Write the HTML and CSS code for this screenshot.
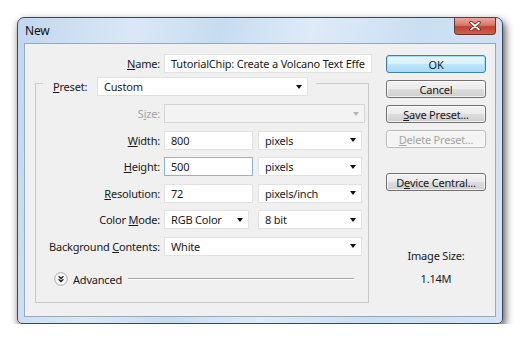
FILE: index.html
```html
<!doctype html>
<html>
  <head>
    <meta charset="utf-8">
    <title>New</title>
    <link rel="stylesheet" href="styles.css">
  </head>
  <body>
    <div class="window">
      <div class="titlebar">
        <span class="title">New</span>
        <span class="close">
          <svg width="12" height="10" viewBox="0 0 12 10">
            <path d="M2 1.5 L10 8.5 M10 1.5 L2 8.5" stroke="#5b1a12" stroke-width="3.4" stroke-linecap="round"/>
            <path d="M2 1.5 L10 8.5 M10 1.5 L2 8.5" stroke="#fff" stroke-width="1.8" stroke-linecap="round"/>
          </svg>
        </span>
      </div>

      <div class="client">
        <div class="form">
          <div class="row">
            <label class="lbl wide"><u>N</u>ame:</label>
            <div class="field name-field">TutorialChip: Create a Volcano Text Effe</div>
          </div>

          <fieldset class="preset">
            <legend>
              <span class="legend-lbl"><u>P</u>reset:</span>
              <div class="select preset-select">Custom<span class="caret"></span></div>
            </legend>

            <div class="rows">
              <div class="row">
                <label class="lbl off">S<u>i</u>ze:</label>
                <div class="select size-select disabled"><span></span><span class="caret"></span></div>
              </div>
              <div class="row">
                <label class="lbl"><u>W</u>idth:</label>
                <div class="pair">
                  <div class="field num">800</div>
                  <div class="select unit">pixels<span class="caret"></span></div>
                </div>
              </div>
              <div class="row">
                <label class="lbl"><u>H</u>eight:</label>
                <div class="pair">
                  <div class="field num focus">500</div>
                  <div class="select unit">pixels<span class="caret"></span></div>
                </div>
              </div>
              <div class="row">
                <label class="lbl"><u>R</u>esolution:</label>
                <div class="pair">
                  <div class="field num">72</div>
                  <div class="select unit">pixels/inch<span class="caret"></span></div>
                </div>
              </div>
              <div class="row">
                <label class="lbl">Color <u>M</u>ode:</label>
                <div class="pair">
                  <div class="select mode">RGB Color<span class="caret"></span></div>
                  <div class="select unit">8 bit<span class="caret"></span></div>
                </div>
              </div>
              <div class="row">
                <label class="lbl">Background <u>C</u>ontents:</label>
                <div class="select bg-select">White<span class="caret"></span></div>
              </div>

              <div class="advanced">
                <svg width="14" height="14" viewBox="0 0 14 14">
                  <circle cx="7" cy="7" r="6.3" fill="#f7f7f7" stroke="#a9a9a9"/>
                  <path d="M4.6 4.3 L7 6.5 L9.4 4.3 M4.6 7.3 L7 9.5 L9.4 7.3" fill="none" stroke="#222" stroke-width="1.3"/>
                </svg>
                <span class="adv-text">Advanced</span>
                <span class="adv-line"></span>
              </div>
            </div>
          </fieldset>
        </div>

        <div class="side">
          <div class="btn default">OK</div>
          <div class="btn">Cancel</div>
          <div class="btn"><u>S</u>ave Preset...</div>
          <div class="btn disabled"><u>D</u>elete Preset...</div>
          <div class="btn device">D<u>e</u>vice Central...</div>
          <div class="info">
            <div>Image Size:</div>
            <div>1.14M</div>
          </div>
        </div>
      </div>
    </div>
  </body>
</html>
```

FILE: styles.css
```css
body {
  margin: 0;
  background: #ffffff;
  font-family: "Noto Sans", "Open Sans", sans-serif;
  font-size: 11px;
  letter-spacing: -0.2px;
  color: #1a1a1a;
}

u {
  text-decoration: underline;
  text-underline-offset: 1px;
}

/* window frame */

.window {
  margin: 17px 0 0 17px;
  width: 486px;
  height: 307px;
  box-sizing: border-box;
  display: flex;
  flex-direction: column;
  border: 1px solid #3d4854;
  border-radius: 7px 7px 5px 5px;
  background: linear-gradient(100deg, #c1d7ee 0%, #dae8f6 22%, #c7dcf1 38%, #deebf8 55%, #cadff3 75%, #d3e4f5 100%);
  box-shadow: 2px 4px 8px rgba(0, 0, 0, 0.7);
}

.titlebar {
  height: 25px;
  display: flex;
  align-items: flex-start;
  padding: 0 6px 0 7px;
}

.title {
  line-height: 25px;
  font-size: 12px;
  color: #111;
}

.close {
  margin-left: auto;
  width: 42px;
  height: 17px;
  box-sizing: border-box;
  display: flex;
  align-items: center;
  justify-content: center;
  border: 1px solid #76302a;
  border-top: none;
  border-radius: 0 0 4px 4px;
  background: linear-gradient(#e8aa9c 0%, #d87766 45%, #c2402e 55%, #d0604a 100%);
}

.client {
  flex: 1;
  margin: 0 6px 6px;
  display: flex;
  padding: 10px 9px 0 10px;
  border: 1px solid #97a9bc;
  background: #f0f0f0;
}

/* form column */

.form {
  width: 338px;
}

.row {
  display: flex;
  align-items: center;
  height: 19px;
}

.lbl {
  width: 124px;
  margin-right: 4px;
  text-align: right;
  white-space: nowrap;
}

.lbl.wide {
  width: 125px;
}

.lbl.off {
  color: #a3a3a3;
}

.field,
.select {
  height: 19px;
  box-sizing: border-box;
  display: flex;
  align-items: center;
  padding: 0 6px;
  border: 1px solid #e2e2e2;
  background: #ffffff;
  white-space: nowrap;
}

.name-field {
  width: 208px;
}

.field.focus {
  border-color: #88b4de;
}

.select {
  justify-content: space-between;
  padding-right: 5px;
}

.caret {
  flex: none;
  width: 0;
  height: 0;
  border-left: 3.5px solid transparent;
  border-right: 3.5px solid transparent;
  border-top: 4px solid #111;
}

.select.disabled {
  background: #f3f3f3;
  border-color: #d6d6d6;
}

.select.disabled .caret {
  border-top-color: #b5b5b5;
}

.preset {
  width: 334px;
  box-sizing: border-box;
  margin: -3px 0 0;
  padding: 8px 0 16px;
  border: 1px solid #c9c9c9;
}

.preset legend {
  display: flex;
  align-items: center;
  margin-left: 7px;
  padding: 7px 8px 0 10px;
}

.legend-lbl {
  width: 38px;
  margin-right: 6px;
}

.preset-select {
  width: 211px;
}

.rows {
  display: flex;
  flex-direction: column;
  gap: 7.5px;
}

.size-select {
  width: 201px;
}

.pair {
  width: 198px;
  display: flex;
  justify-content: space-between;
}

.num {
  width: 89px;
}

.mode {
  width: 85px;
}

.unit {
  width: 104px;
}

.bg-select {
  width: 198px;
}

.advanced {
  margin-top: 9px;
  height: 14px;
  display: flex;
  align-items: center;
  padding: 0 14px 0 18px;
}

.adv-text {
  margin-left: 5px;
}

.adv-line {
  flex: 1;
  margin-left: 6px;
  border-top: 1px solid #a9a9a9;
  border-bottom: 1px solid #fbfbfb;
}

/* button column */

.side {
  width: 100px;
  margin-left: 13px;
  padding-top: 1px;
  display: flex;
  flex-direction: column;
  gap: 7px;
}

.btn {
  height: 18px;
  box-sizing: border-box;
  display: flex;
  align-items: center;
  justify-content: center;
  border: 1px solid #707070;
  border-radius: 3px;
  background: linear-gradient(#f2f2f2 0%, #ebebeb 48%, #dddddd 52%, #cfcfcf 100%);
  box-shadow: inset 0 0 0 1px rgba(255, 255, 255, 0.7);
}

.btn.default {
  border-color: #3c7fb1;
  box-shadow: inset 0 0 0 1px #9fe0f7;
  background: linear-gradient(#eaf6fd 0%, #d9f0fc 48%, #bee6fd 52%, #a7d9f5 100%);
}

.btn.disabled {
  color: #a5a5a5;
  border-color: #b8bcbf;
  background: #f4f4f4;
}

.btn.device {
  margin-top: 18px;
}

.info {
  margin-top: 50px;
  display: flex;
  flex-direction: column;
  align-items: center;
  gap: 7px;
  line-height: 16px;
}
```
